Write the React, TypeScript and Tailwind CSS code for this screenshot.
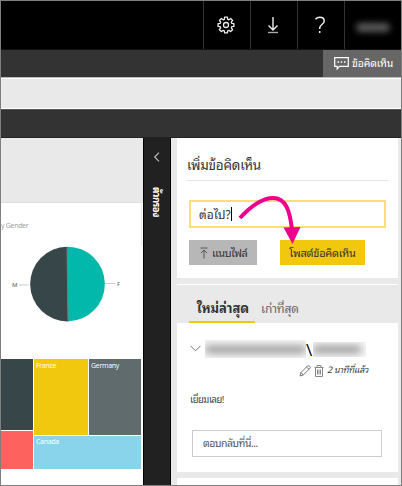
import React from 'react';

const thai = "font-['Leelawadee_UI','Noto_Sans_Thai_Looped','Loma','Noto_Sans_Thai','Noto_Sans','Open_Sans',sans-serif]";

function TopBar() {
  return (
    <header className="flex h-[48px] shrink-0 justify-end bg-black text-white">
      <div className="flex w-[47px] items-center justify-center border-l border-[#333] pr-[2px]">
        <svg width="18" height="18" viewBox="0 0 18 18" fill="none" stroke="#eee" strokeWidth="1.3" strokeLinejoin="round">
          <path d="M7.600 1.200h2.800l.3 2.100 1.200.5 1.800-1.300 1.900 1.900-1.300 1.800.5 1.200 2.100.3v2.700l-2.100.3-.5 1.200 1.300 1.800-1.900 1.900-1.800-1.300-1.200.5-.3 2.100H7.600l-.3-2.100-1.200-.5-1.800 1.300-1.900-1.900 1.300-1.800-.5-1.200-2.100-.3V7.700l2.100-.3.5-1.200-1.300-1.800 1.900-1.900 1.800 1.300 1.200-.5z" />
          <circle cx="9" cy="9" r="2.500" />
        </svg>
      </div>
      <div className="flex w-[47px] items-center justify-center border-l border-[#333] pr-[3px]">
        <svg width="12" height="18" viewBox="0 0 12 18" fill="none" stroke="#eee" strokeWidth="1.400">
          <path d="M6 1v13M1.500 9.500 6 14l4.500-4.500" />
          <path d="M1 16.500h10" stroke="#aaa" />
        </svg>
      </div>
      <div className="flex w-[47px] items-center justify-center border-l border-[#333] pr-[2px]">
        <svg width="12" height="18" viewBox="0 0 12 18" fill="none" stroke="#eee" strokeWidth="1.500">
          <path d="M1.500 3.200C2.600 1.800 4 1.200 5.800 1.200 8.500 1.200 10.200 2.600 10.200 4.900 10.200 8.400 5.700 8.600 5.700 12v1" />
          <path d="M5.700 15v2" />
        </svg>
      </div>
      <div className="flex w-[57px] items-center justify-center border-l border-[#333] pt-1">
        <div className="h-[9px] w-[34px] rounded-full bg-[#595959] blur-[3px]" />
      </div>
    </header>
  );
}

function ActionBar() {
  return (
    <div className="flex h-[29px] shrink-0 justify-end border-b border-[#bbb] border-t border-t-[#111] bg-[#333]">
      <div className="flex w-[78px] items-center bg-[#666] pl-[11px] text-white">
        <svg width="15" height="13" viewBox="0 0 15 13" fill="none" stroke="white" strokeWidth="1.200">
          <path d="M.7.7h13.600v8.600H5.500l-2.300 2.600V9.300H.7z" />
          <path d="M3.500 5h1.500M6.700 5h1.500M10 5h1.500" strokeWidth="1.500" />
        </svg>
        <span className="ml-[3px] whitespace-nowrap text-[10.5px] leading-none tracking-[-0.15px]">ข้อคิดเห็น</span>
      </div>
    </div>
  );
}

function Report() {
  return (
    <section className="flex w-[142px] shrink-0 flex-col bg-white">
      <div className="h-[65px] border-b border-[#ddd] bg-[#e9e9e9]" />
      <div className="h-[43px] w-[141px] border-r border-[#e9e9e9] pt-[18px]">
        <p className="whitespace-nowrap font-['Open_Sans',sans-serif] text-[7px] leading-[10px] tracking-[-0.3px] text-[#999]">y Gender</p>
      </div>
      <svg className="shrink-0" width="142" height="113" viewBox="1 246 142 113">
        <path d="M67 246.700A37.300 37.300 0 0 0 68 321.400z" fill="#374649" />
        <path d="M67 246.700A37.300 37.300 0 0 1 68 321.400z" fill="#01b8aa" />
        <path d="M67 247 68 321" stroke="#777" />
        <path d="M19 285h9.500M105 283.500h10" stroke="#ccc" />
        <text x="12" y="287" fontSize="6" fontWeight="600" fontFamily="Open Sans" fill="#777">M</text>
        <text x="117" y="285.500" fontSize="6" fontWeight="600" fontFamily="Open Sans" fill="#777">F</text>
      </svg>
      <div className="flex h-[110px] w-[140px] gap-px font-['Open_Sans',sans-serif] text-[7px] leading-[10px] text-white">
        <div className="flex w-[32px] flex-col gap-px">
          <div className="h-[71px] bg-[#374649]" />
          <div className="flex-1 bg-[#fd625e]" />
        </div>
        <div className="flex flex-1 flex-col gap-px">
          <div className="flex h-[76px] gap-px">
            <div className="w-[54px] bg-[#f2c80f] pl-[2px] pt-[2px] tracking-[-0.3px]">France</div>
            <div className="flex-1 bg-[#5f6b6d] pl-[2px] pt-[2px] tracking-[-0.3px]">Germany</div>
          </div>
          <div className="flex-1 bg-[#8ad4eb] pl-[2px] pt-px tracking-[-0.3px]">Canada</div>
        </div>
      </div>
    </section>
  );
}

function FilterRail() {
  return (
    <aside className="flex w-[28px] shrink-0 flex-col items-center border-x border-black bg-[#212121]">
      <svg className="mt-[14px]" width="8" height="10" viewBox="0 0 8 10" fill="none" stroke="#bbb" strokeWidth="1.200">
        <path d="M6 .7 1.700 5 6 9.300" />
      </svg>
      <span className="mt-[25px] text-[9.5px] font-bold leading-[14px] tracking-[-0.5px] text-white [text-orientation:sideways] [writing-mode:vertical-rl]">ตัวกรอง</span>
    </aside>
  );
}

function Composer() {
  return (
    <section className="relative h-[140px] shrink-0 bg-white px-[10px] pt-[15px]">
      <h1 className="h-[28px] whitespace-nowrap border-b border-[#e5e5e5] text-[13.5px] leading-[23px] tracking-[-0.25px] text-[#333]">เพิ่มข้อคิดเห็น</h1>
      <div className="ml-[2px] mt-[19px] flex h-[28px] w-[197px] items-center border-2 border-[#f9df75] pl-[8px] text-[12px] leading-none text-[#333]">
        <span className="-mt-px">ต่อไป?</span>
        <span className="h-[14px] w-px bg-black" />
      </div>
      <div className="ml-[2px] mt-[12px] flex gap-[23px] text-[11px] leading-none text-[#333]">
        <button className="flex h-[25px] w-[68px] items-center bg-[#b7b7b7] pl-[11px]">
          <svg width="8" height="12" viewBox="0 0 8 12" fill="none" stroke="#555"><path d="M.5 1h7M4 11.500V3M1 6l3-3 3 3" /></svg>
          <span className="ml-[4px] whitespace-nowrap tracking-[-0.5px]">แนบไฟล์</span>
        </button>
        <button className="flex h-[25px] w-[85px] items-center justify-center whitespace-nowrap bg-[#f2c80f] tracking-[-0.25px]">โพสต์ข้อคิดเห็น</button>
      </div>
      <svg className="absolute left-[61px] top-[57px]" width="66" height="50" viewBox="238 195 66 50">
        <path d="M240 218C252 205 263 198 273 198C286 198 290 211 292 230" fill="none" stroke="#ec008c" strokeWidth="4" />
        <path d="M283.500 227.500 300.500 227 292.500 244z" fill="#ec008c" />
      </svg>
    </section>
  );
}

function Comments() {
  return (
    <>
      <nav className="mt-[6px] flex h-[39px] shrink-0 items-end border-t border-white pl-[12px]">
        <div className="flex h-[28px] w-[66px] items-center justify-center whitespace-nowrap border-b-2 border-[#f2c80f] pb-[2px] pl-[2px] text-[13px] font-bold leading-none text-[#333]">ใหม่ล่าสุด</div>
        <div className="ml-[6px] flex h-[28px] items-center whitespace-nowrap pb-[3px] text-[12px] leading-none tracking-[-0.15px] text-[#666]">เก่าที่สุด</div>
      </nav>
      <article className="h-[149px] shrink-0 bg-white pt-[18px]">
        <div className="flex h-[16px] items-center pl-[13px]">
          <svg className="-mt-[2px]" width="11" height="7" viewBox="0 0 11 7" fill="none" stroke="#777"><path d="m.5.800 5 5 5-5" /></svg>
          <div className="ml-[4px] flex h-[18px] w-[101px] items-center overflow-hidden bg-[#f8f8f8]"><div className="h-[7px] w-full bg-[#8a8a8a] blur-[4px]" /></div>
          <span className="w-[7px] font-['Open_Sans',sans-serif] text-[17px] leading-none text-black">\</span>
          <div className="flex h-[15px] w-[53px] items-center overflow-hidden bg-[#f8f8f8]"><div className="h-[7px] w-[48px] bg-[#8a8a8a] blur-[4px]" /></div>
        </div>
        <div className="mt-[5px] flex h-[16px] items-center pl-[122px]">
          <svg className="mt-[2px]" width="12" height="12" viewBox="0 0 12 12" fill="none" stroke="#777"><path d="M1 11 2 7.500 8.500 1Q10 .3 11 1.500T10.500 3.800L4.200 10zM2 7.500 4.200 10M7.500 2l2.700 2.500" /></svg>
          <svg className="ml-[3px] mt-[2px]" width="10" height="12" viewBox="0 0 10 12" fill="none" stroke="#888"><path d="M.5 2.500h9M3 2.500v-2h4v2M1.500 2.500v9h7v-9M3.500 4.500v5M5 4.500v5M6.500 4.500v5" /></svg>
          <span className="-mt-px ml-[3px] whitespace-nowrap text-[9px] italic leading-none tracking-[-0.3px] text-[#444]">2 นาทีที่แล้ว</span>
        </div>
        <p className="mt-[11px] h-[20px] pl-[13px] text-[9.5px] leading-[20px] tracking-[-0.5px] text-[#444]">เยี่ยมเลย!</p>
        <div className="ml-[15px] mt-[21px] flex h-[27px] w-[190px] items-center whitespace-nowrap border border-[#ccc] pl-[10px] text-[10.5px] leading-none tracking-[-0.55px] text-[#555]">ตอบกลับที่นี่...</div>
      </article>
      <div className="mt-[6px] flex-1 bg-white" />
    </>
  );
}

export default function App() {
  return (
    <main className={`flex h-[486px] w-[402px] flex-col overflow-hidden border border-[#7f7f7f] bg-[#e9e9e9] ${thai}`}>
      <TopBar />
      <ActionBar />
      <div className="h-[31px] shrink-0 border-y border-white bg-[#e9e9e9]" />
      <div className="h-[29px] shrink-0 border-b border-t border-b-[#222] border-t-[#555] bg-[#333]" />
      <div className="flex min-h-0 flex-1">
        <Report />
        <FilterRail />
        <div className="ml-[6px] flex w-[221px] shrink-0 flex-col">
          <Composer />
          <Comments />
        </div>
      </div>
    </main>
  );
}
